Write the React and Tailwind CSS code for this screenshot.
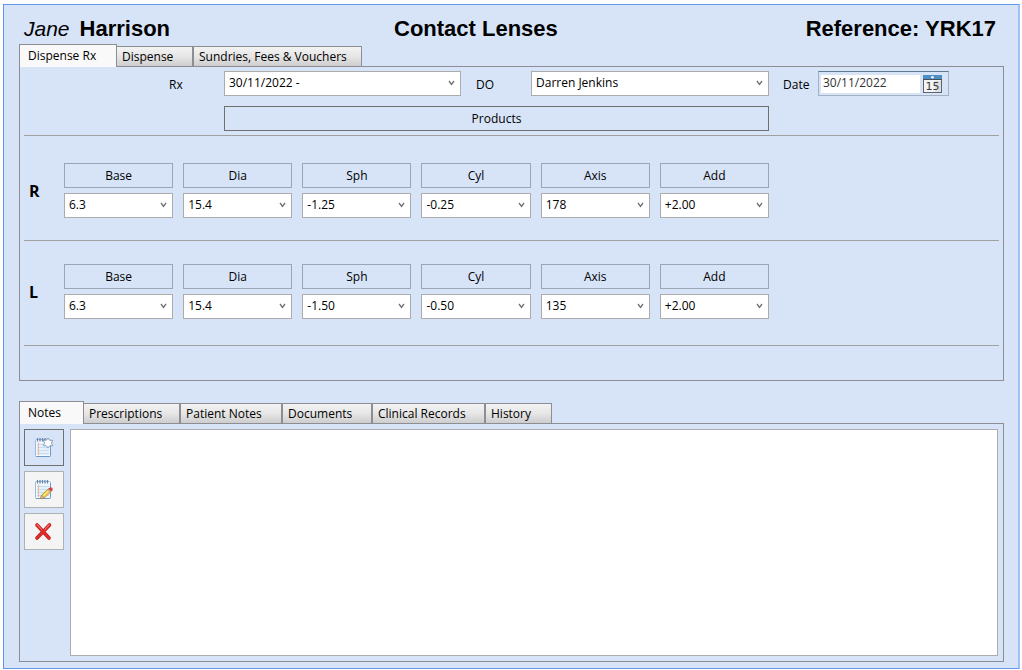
import React, { useState } from "react";

const RX_FIELDS = ["Base", "Dia", "Sph", "Cyl", "Axis", "Add"];

const TOP_TABS = [
  { label: "Dispense Rx", width: "w-[98px]" },
  { label: "Dispense", width: "w-[76px]" },
  { label: "Sundries, Fees & Vouchers", width: "w-[169px]" },
];

const BOTTOM_TABS = [
  { label: "Notes", width: "w-[65px]" },
  { label: "Prescriptions", width: "w-[96px]" },
  { label: "Patient Notes", width: "w-[102px]" },
  { label: "Documents", width: "w-[90px]" },
  { label: "Clinical Records", width: "w-[113px]" },
  { label: "History", width: "w-[67px]" },
];

function Tabs({ tabs, label }) {
  const [active, setActive] = useState(0);

  return (
    <div role="tablist" aria-label={label} className="flex items-end h-[22px]">
      {tabs.map((tab, i) => (
        <button
          key={tab.label}
          type="button"
          role="tab"
          aria-selected={i === active}
          onClick={() => setActive(i)}
          className={`${tab.width} shrink-0 whitespace-nowrap text-left border-[#8c8e94] ${
            i === active
              ? "relative z-10 -mb-px h-[23px] border border-b-0 bg-[#f9f9f9] pl-2"
              : "h-5 border-t border-r bg-linear-to-b from-[#f3f3f3] via-[#e6e6e6] to-[#cdcdcd] pl-[5px]"
          } ${i !== active && i !== active + 1 ? "border-l" : ""}`}
        >
          {tab.label}
        </button>
      ))}
    </div>
  );
}

function ComboBox({ id, label, value, className = "" }) {
  return (
    <div className={`relative ${className}`}>
      <select
        id={id}
        aria-label={label}
        defaultValue={value}
        className="block h-[25px] w-full appearance-none rounded-none border border-[#acacac] bg-white pb-0.5 pl-1 pr-5 outline-none"
      >
        <option>{value}</option>
      </select>
      <svg
        viewBox="0 0 7 6"
        className="pointer-events-none absolute right-1.5 top-[9px] h-1.5 w-[7px]"
        fill="none"
        stroke="#707070"
        strokeWidth="1.3"
      >
        <path d="M1 1 L3.5 4.4 L6 1" />
      </svg>
    </div>
  );
}

function EyeRow({ eye, values, className }) {
  return (
    <div className={`flex items-center border-b border-[#a0a0a0] ${className}`}>
      <h2 className="w-10 shrink-0 pl-[5px] text-base font-bold">{eye}</h2>
      <div className="grid w-[705px] grid-cols-6 gap-x-2.5 gap-y-[5px]">
        {RX_FIELDS.map((field) => (
          <button
            key={field}
            type="button"
            className="h-[25px] border border-[#9aa5b5] bg-[#d7e4f7]"
          >
            {field}
          </button>
        ))}
        {values.map((value, i) => (
          <ComboBox
            key={RX_FIELDS[i]}
            label={`${eye} ${RX_FIELDS[i]}`}
            value={value}
          />
        ))}
      </div>
    </div>
  );
}

function CalendarIcon() {
  return (
    <svg viewBox="0 0 20 18" className="h-[18px] w-5">
      <rect x="0.5" y="0.5" width="18" height="17" fill="#f4f4f4" stroke="#5b6470" />
      <rect x="12" y="6" width="6" height="11" fill="#dedede" />
      <rect x="0" y="0" width="19" height="4" fill="#4f8ec4" />
      <path d="M0 4.5 H19" stroke="#44505c" />
      <circle cx="9.5" cy="2.3" r="1.3" fill="#fff" />
      <text
        x="9.5"
        y="15"
        textAnchor="middle"
        fontSize="11"
        fontFamily="DejaVu Sans, sans-serif"
        fill="#3a3a3a"
      >
        15
      </text>
    </svg>
  );
}

function Notepad({ children }) {
  return (
    <svg viewBox="0 0 20 20" className="h-5 w-5" fill="none">
      <rect x="1.5" y="2.5" width="15" height="17" rx="1" fill="#f1f8fe" stroke="#9dbbd9" />
      <path d="M16.5 4 V18.5 Q16.5 19.5 15.5 19.5 H2" stroke="#6f9ac8" />
      <path d="M3 7.5 H15 M3 10.5 H15 M3 13.5 H15 M3 16.5 H15" stroke="#c3def3" strokeWidth="1.5" />
      <path d="M4.5 5.5 V18" stroke="#f7b392" />
      <path
        d="M3.5 1 V4.5 M6 1 V4.5 M8.5 1 V4.5 M11 1 V4.5 M13.5 1 V4.5"
        stroke="#6383a9"
        strokeWidth="1.2"
      />
      {children}
    </svg>
  );
}

function NewNoteIcon() {
  return (
    <Notepad>
      <path
        d="M14 1 L15.7 3.3 L18.8 3.3 L17.4 6 L18.8 8.7 L15.7 8.7 L14 11.2 L12.3 8.7 L9.2 8.7 L10.6 6 L9.2 3.3 L12.3 3.3 Z"
        fill="#fbfdff"
        stroke="#8299b5"
        strokeWidth="0.9"
      />
    </Notepad>
  );
}

function EditNoteIcon() {
  return (
    <Notepad>
      <path d="M6.5 19.8 L7.6 16.2 L14.6 9.6 L17.4 12.3 L10.3 18.8 Z" fill="#f6cf4a" stroke="#b8862b" strokeWidth="0.8" />
      <path d="M9 17 L15.8 10.8" stroke="#fff0a0" />
      <path d="M6.5 19.8 L7.6 16.2 L10.3 18.8 Z" fill="#e8c9a0" stroke="#8b7355" strokeWidth="0.6" />
      <path d="M14.2 9.9 L15.8 8.4 Q17.2 7.8 18.3 9 Q19.1 10.2 18.4 11.3 L17 12.6 Z" fill="#d2434a" />
      <path d="M13.7 10.4 L16.5 13.1" stroke="#9fa9b5" strokeWidth="1.1" />
    </Notepad>
  );
}

function DeleteIcon() {
  return (
    <svg viewBox="0 0 20 20" className="h-5 w-5" fill="none" strokeLinecap="round">
      <path d="M3 4 L15 17 M15.5 4 L3 17" stroke="#b81b1b" strokeWidth="3.6" />
      <path d="M3 4 L15 17 M15.5 4 L3 17" stroke="#e32b2b" strokeWidth="2.4" />
      <path d="M3 3.6 L7.5 8.4 M15.3 3.6 L11 8.4" stroke="#ee6a62" strokeWidth="1.2" />
    </svg>
  );
}

export default function App() {
  return (
    <div className="flex min-h-screen flex-col bg-white pt-1 pr-0.5 pb-px pl-[3px] font-['Open_Sans','Noto_Sans',sans-serif] text-xs leading-4 text-black">
      <main className="flex flex-1 flex-col border border-r-2 border-[#6495ed] border-r-[#a3bff4] bg-[#d7e4f7] pr-3.5 pb-1.5 pl-[15px]">
        <header className="grid grid-cols-[370px_1fr_auto] pt-3 pr-2 pb-[3px] pl-[5px] font-['Liberation_Sans',Arial,sans-serif] text-[22px] leading-6 font-bold">
          <div className="flex gap-2.5">
            <span className="text-[21px] font-normal italic">Jane</span>
            <span>Harrison</span>
          </div>
          <h1>Contact Lenses</h1>
          <div>Reference: YRK17</div>
        </header>

        <Tabs tabs={TOP_TABS} label="Dispensing" />
        <section className="border border-[#8c8e94] px-1 pt-1 pb-[34px]">
          <div className="border-b border-[#a0a0a0] pb-1">
            <div className="flex items-center pl-[145px]">
              <label htmlFor="rx" className="w-[55px] pt-0.5">
                Rx
              </label>
              <ComboBox id="rx" value="30/11/2022 -" className="w-[237px]" />
              <label htmlFor="do" className="w-[70px] pt-0.5 pl-[15px]">
                DO
              </label>
              <ComboBox id="do" value="Darren Jenkins" className="w-[238px]" />
              <label htmlFor="date" className="w-[49px] pt-0.5 pl-3.5">
                Date
              </label>
              <div className="flex h-[25px] w-[131px] items-center gap-[3px] border border-[#a3b1c2] border-t-[#5f7a8c] pl-0.5">
                <input
                  id="date"
                  type="text"
                  defaultValue="30/11/2022"
                  className="h-[18px] w-[99px] bg-white pb-0.5 pl-0.5 text-[#333] outline-none"
                />
                <button type="button" aria-label="Open calendar">
                  <CalendarIcon />
                </button>
              </div>
            </div>
            <button
              type="button"
              className="mt-2.5 ml-[200px] block h-[25px] w-[545px] border border-[#707070]"
            >
              Products
            </button>
          </div>

          <EyeRow
            eye="R"
            values={["6.3", "15.4", "-1.25", "-0.25", "178", "+2.00"]}
            className="pt-[27px] pb-[22px]"
          />
          <EyeRow
            eye="L"
            values={["6.3", "15.4", "-1.50", "-0.50", "135", "+2.00"]}
            className="pt-[23px] pb-[26px]"
          />
        </section>

        <div className="mt-5">
          <Tabs tabs={BOTTOM_TABS} label="Patient record" />
        </div>
        <section className="flex flex-1 gap-1.5 border border-[#8c8e94] py-[5px] pr-[5px] pl-1">
          <div className="flex flex-col gap-[5px]">
            <button
              type="button"
              aria-label="New note"
              className="flex h-[37px] w-10 items-center justify-center border border-[#707070] bg-[#d7e4f7] pb-0.5"
            >
              <NewNoteIcon />
            </button>
            <button
              type="button"
              aria-label="Edit note"
              className="flex h-[37px] w-10 items-center justify-center border border-[#adb2b5] bg-[#f4f4f4] pb-0.5"
            >
              <EditNoteIcon />
            </button>
            <button
              type="button"
              aria-label="Delete note"
              className="flex h-[37px] w-10 items-center justify-center border border-[#adb2b5] bg-[#f4f4f4] pb-0.5"
            >
              <DeleteIcon />
            </button>
          </div>
          <textarea
            aria-label="Notes"
            className="flex-1 resize-none border border-[#abadb3] bg-white p-1 outline-none"
          />
        </section>
      </main>
    </div>
  );
}
